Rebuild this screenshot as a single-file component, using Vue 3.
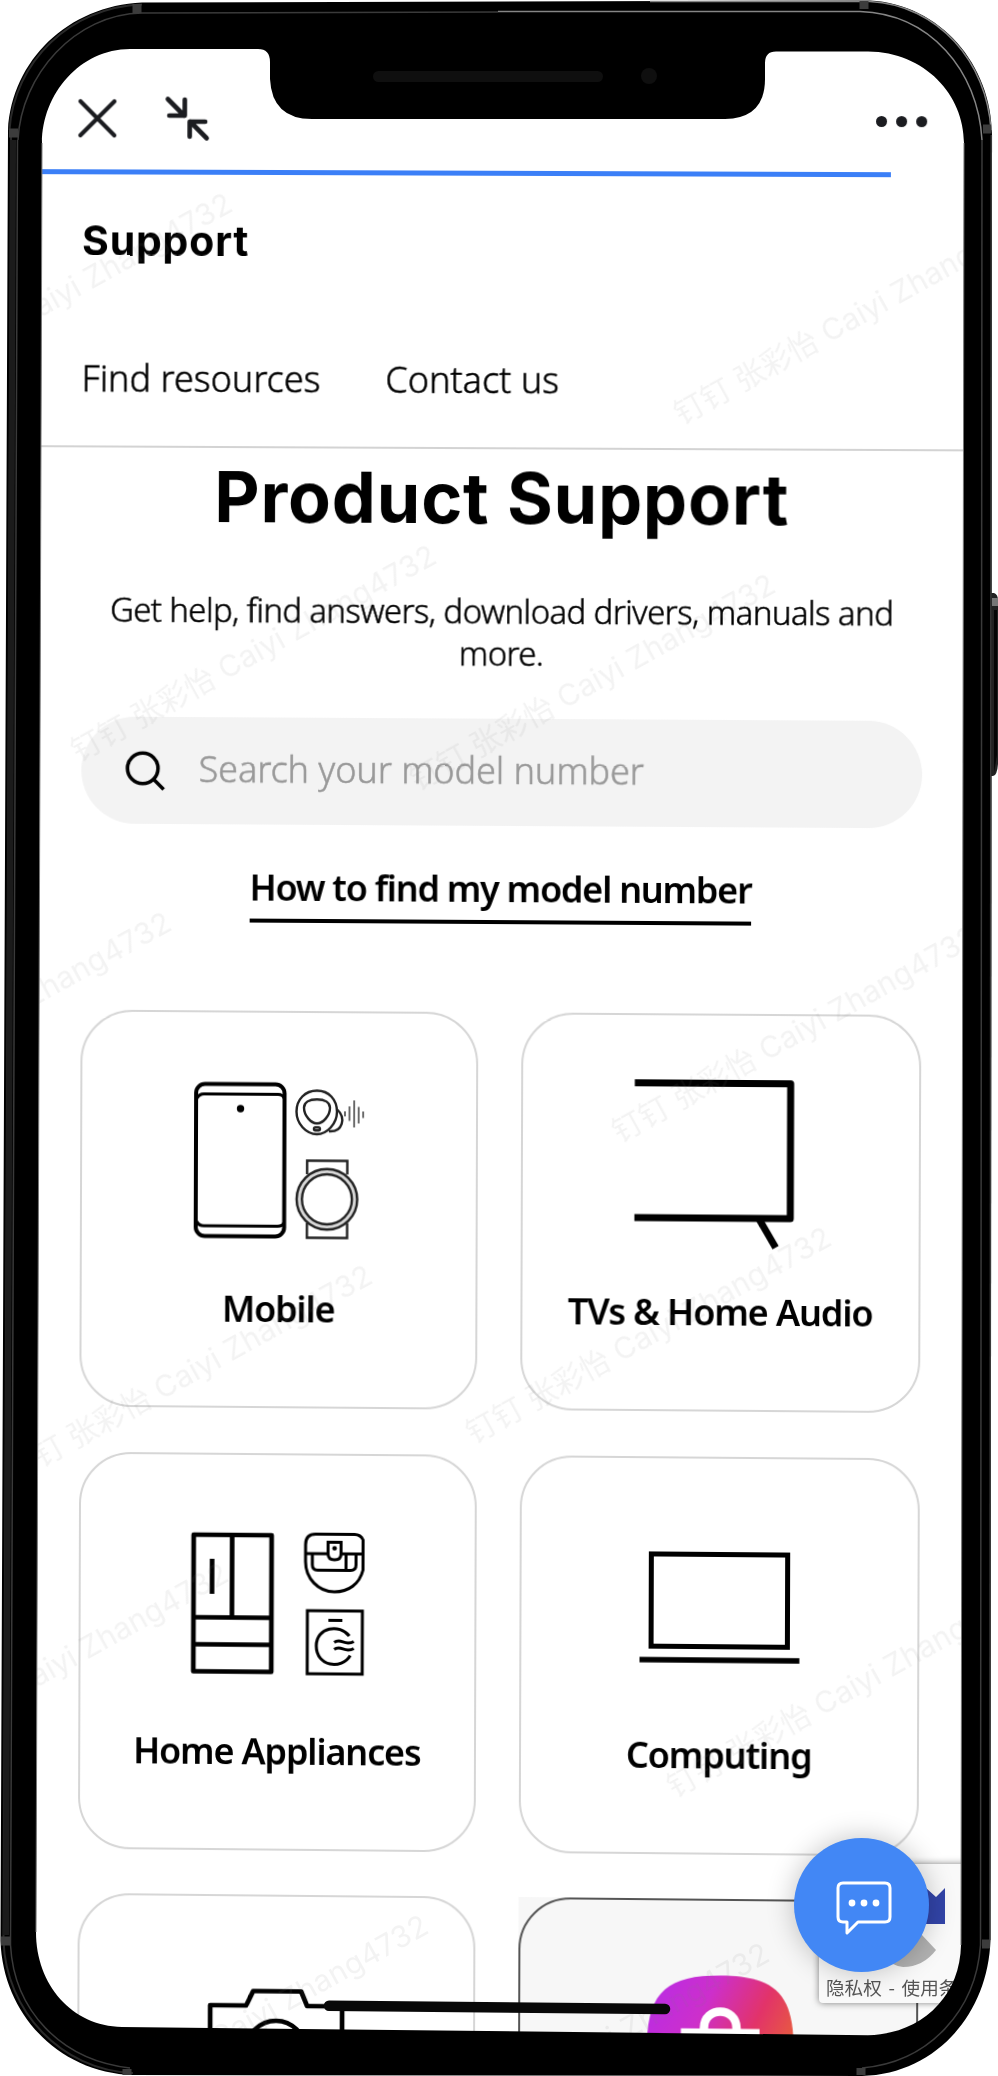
<template>
    <div class="phone">
        <div class="screen">
            <div class="page">
                <header class="toolbar">
                    <svg class="icon-close" viewBox="0 0 40 40">
                        <path d="M3 3L37 37M37 3L3 37" />
                    </svg>
                    <svg class="icon-shrink" viewBox="0 0 46 46">
                        <path d="M3.500 3.500L20 20M5 20H20.500V4M42.500 42.500L26 26M41 26H25.500V41" />
                    </svg>
                    <div class="dots"><i></i><i></i><i></i></div>
                </header>
                <div class="progress"></div>
                <div class="brand">Support</div>
                <nav class="nav">
                    <a class="nav-first">Find resources</a>
                    <a class="nav-second">Contact us</a>
                </nav>
                <main class="main">
                    <h1 class="main-title">Product Support</h1>
                    <p class="intro">Get help, find answers, download drivers, manuals and<br />more.</p>
                    <div class="search">
                        <svg viewBox="0 0 46 46">
                            <circle cx="19.500" cy="19.500" r="15.300" />
                            <path d="M30 30L40.500 40.500" />
                        </svg>
                        <span>Search your model number</span>
                    </div>
                    <div class="help"><a>How to find my model number</a></div>
                    <div class="cards-grid">
                        <div
                            v-for="category in categories"
                            :key="category.icon"
                            class="cell"
                            :class="{ shaded: category.icon === 'shop' }"
                        >
                            <div class="card">
                                <svg v-if="category.icon === 'mobile'" class="art" viewBox="0 0 398 250">
                                    <rect x="116" y="73.500" width="88.500" height="152" rx="9" stroke-width="4" />
                                    <path stroke-width="3" d="M117 88Q119 83.500 124 83.500H198Q203 83.500 204.500 88M117 211Q119 215.300 124 215.300H198Q203 215.300 204.500 211" />
                                    <circle class="solid" cx="160.500" cy="98" r="3.700" />
                                    <g class="thin">
                                        <path d="M237 79.500C249 79.500 257 88.500 257 100.500C257 112.500 247 123 237 123C226 123 216.500 112.500 216.500 100.500C216.500 88.500 225 79.500 237 79.500Z" />
                                        <path d="M237 88.300C245 88.300 250 91.500 250 96.500C250 104.500 243 112.300 237 112.300C231 112.300 224 104.500 224 96.500C224 91.500 229 88.300 237 88.300Z" />
                                        <path d="M257.500 98.500C266 106.500 263 121 249 120" />
                                        <rect x="234" y="116.200" width="6" height="3" rx="1.500" />
                                        <path class="sound" d="M265 100V105M269.500 95V109.500M274.200 89V116M278.700 95.500V112M283.200 100V106.500" />
                                        <path d="M227.300 163V149.500H267.500V163M227.300 211.500V226.500H267.500V211.500" />
                                        <circle cx="247.200" cy="188" r="28" stroke="#d8d8d8" stroke-width="4" />
                                        <circle cx="247.200" cy="188" r="30.300" />
                                        <circle cx="247.200" cy="188" r="25" />
                                    </g>
                                </svg>
                                <svg v-else-if="category.icon === 'tv'" class="art" viewBox="0 0 398 250">
                                    <path stroke-width="7" stroke-linejoin="round" d="M113.500 69.500H269V204H113.500" />
                                    <path stroke-width="7" d="M237.500 204L254.500 233" />
                                </svg>
                                <svg v-else-if="category.icon === 'home'" class="art" viewBox="0 0 398 250">
                                    <g stroke-width="4.700" stroke-linejoin="round">
                                        <rect x="115" y="82" width="78" height="136.500" />
                                        <path d="M153.500 83V164.500M115 164.500H193M115 191.500H193" />
                                        <path d="M133.500 106V141" />
                                    </g>
                                    <g stroke-width="3">
                                        <path d="M284.500 86Q282 80.500 276 80.500H237Q227 80.500 227 91V108C227 125 240 138 256 138C270 138 281 130 284.500 116Z" />
                                        <path d="M227 100H249M262.500 100H285M233.800 100V111Q233.800 116.500 239 116.500H272Q277.500 116.500 277.500 111V100M267.500 100V116.500" />
                                        <path d="M249.500 88.500H262.500V100Q262.500 106 256 106Q249.500 106 249.500 100Z" />
                                        <circle class="solid" cx="256" cy="94.500" r="2.300" />
                                        <rect x="229" y="157" width="55" height="63" />
                                        <path d="M250 166.500H264M271 182C261.500 169.500 238 173 238 192C238 213 263.500 216 272 201.500" />
                                        <path d="M256 188.500C262.500 183.500 266.500 192.500 275.500 187.500M256 195.500C262.500 190.500 266.500 199.500 275.500 194.500" />
                                    </g>
                                </svg>
                                <svg v-else-if="category.icon === 'computing'" class="art" viewBox="0 0 398 250">
                                    <rect x="131.500" y="97.500" width="136" height="92" stroke-width="5" />
                                    <path stroke-width="5.500" d="M120 203H279.500" />
                                </svg>
                                <svg v-else-if="category.icon === 'camera'" class="art" viewBox="0 0 398 250">
                                    <g stroke-width="4.700" stroke-linejoin="round">
                                        <path d="M133 180V111H169L176 96.500H224L230 111H265V180Z" />
                                        <circle cx="199" cy="155" r="29" />
                                    </g>
                                </svg>
                                <svg v-else class="art" viewBox="0 0 398 250">
                                    <defs>
                                        <linearGradient id="shop" x1="0" y1="0" x2="1" y2=".5">
                                            <stop offset="0" stop-color="#b62be8" />
                                            <stop offset=".4" stop-color="#cd2fcb" />
                                            <stop offset=".72" stop-color="#e23369" />
                                            <stop offset="1" stop-color="#e8603a" />
                                        </linearGradient>
                                    </defs>
                                    <path fill="url(#shop)" stroke="none" d="M202 76.500C257 76.500 275 95 275 149.500C275 204 257 222 202 222C147 222 128.500 204 128.500 149.500C128.500 95 147 76.500 202 76.500Z" />
                                    <path stroke="#fff" stroke-width="8.500" d="M185.500 134V129C185.500 107 218 107 218 129V134" />
                                    <path fill="#fff" stroke="none" d="M162.500 129.500H241V190H162.500Z" />
                                </svg>
                                <div class="label">{{ category.text }}</div>
                            </div>
                        </div>
                    </div>
                </main>
            </div>

            <div class="recaptcha">
                <svg viewBox="0 0 145 140">
                    <path fill="#3244a8" d="M80 24H107L117 33L126 24V60H80Z" />
                    <path fill="#b1b1b1" d="M60 70H102L117 86Q104 103 84 103Q62 101 60 70Z" />
                </svg>
                <span>隐私权 - 使用条款</span>
            </div>
            <div class="chat">
                <svg viewBox="0 0 60 60">
                    <path d="M9 5H51Q56 5 56 10V39Q56 44 51 44H24L13 55V44H9Q4 44 4 39V10Q4 5 9 5Z" />
                    <circle cx="18" cy="25" r="3.400" />
                    <circle cx="30" cy="25" r="3.400" />
                    <circle cx="42" cy="25" r="3.400" />
                </svg>
            </div>
            <span
                v-for="(mark, index) in marks"
                :key="index"
                class="mark"
                :style="{ left: `${mark[0]}px`, top: `${mark[1]}px` }"
            >钉钉 张彩怡 Caiyi Zhang4732</span>
        </div>

        <!-- device body with the screen cut out -->
        <svg class="frame" viewBox="0 0 998 2076">
            <path fill="#222" d="M990 593H994Q998 594 998 601V764Q997 776 993 776H990Z" />
            <path fill="#050505" d="M994 610H997V755L994 773Z" />
            <rect x="992" y="598" width="6" height="8" fill="#777" />
            <path
                fill="#000"
                fill-rule="evenodd"
                d="M142 2.500L870 .5C940 4 992 65 992 135L990.500 1940C988 2015 935 2074 862 2076L133 2075C60 2073 3 2015 .5 1941L8 130C12 60 68 6 142 2.500Z
                M130 49H258Q270 49 270 62V79Q272 119 312 119H725Q765 118 765 79V63Q765 51.500 776 51.500H868C925 52 964 95 964 143L961 1945C960 1998 920 2034 868 2035.300L122 2027C72 2026 36 1985 36 1932L42 143C42 94 80 49 130 49Z"
            />
            <path class="metal" d="M9.500 130C14 62 70 7 142 4.500" />
            <path class="metal" d="M11 135L3.500 1941C6 2010 60 2070 133 2073" />
            <path class="metal wide" d="M13 140L6 1935" />
            <path class="shine" d="M18 140C21 75 75 14 142 13L498 12" />
            <path class="shine" d="M17.500 140L10.500 1945C14 2010 60 2060 130 2068" />
            <path class="shine bright" d="M498 11.500L860 11.500C930 14 978 70 982 140" />
            <path class="shine" d="M982 140L980.500 1945C976 2010 930 2062 862 2068" />
            <path class="shine bright" d="M650 1.500L870 1.500C938 5 987 62 991 130" />
            <path class="shine" d="M991.300 135L989.800 1940" />
            <path class="seam" d="M137 4V13M864 1V9M9 133H18M983 129H991M982 1944H990M1 1941H10M127 2069V2075M861 2068V2075" />
            <path class="edge" d="M42 143L36 1932M964 143L961 1945" />
            <rect x="373" y="71" width="230" height="11" rx="5.500" fill="#0f0f0f" />
            <circle cx="649" cy="76" r="8" fill="#0f0f0f" />
            <path d="M329 2005.800L665 2009" stroke="#080808" stroke-width="10.500" stroke-linecap="round" />
        </svg>
    </div>
</template>

<script setup>
const categories = [
    { icon: 'mobile', text: 'Mobile' },
    { icon: 'tv', text: 'TVs & Home Audio' },
    { icon: 'home', text: 'Home Appliances' },
    { icon: 'computing', text: 'Computing' },
    { icon: 'camera', text: '' },
    { icon: 'shop', text: '' }
]

// centre of the first glyph of every watermark line
const marks = [
    [689, 408],
    [-118, 393],
    [86, 745],
    [425, 774],
    [-179, 1112],
    [627, 1126],
    [22, 1465],
    [481, 1427],
    [-122, 1763],
    [682, 1781],
    [78, 2115],
    [419, 2143]
]
</script>

<style>
body {
    margin: 0;
    background: #fff;
}
</style>

<style scoped>
.phone {
    position: relative;
    width: 998px;
    height: 2076px;
    overflow: hidden;
    font-family: "Noto Sans", "Noto Sans CJK SC", sans-serif;
    color: #000;
}

.screen {
    position: relative;
    height: 2076px;
    background: #fff;
    clip-path: inset(30px 22px 30px 22px round 120px);
}

/* the screen is seen at a very slight angle */
.page {
    box-sizing: border-box;
    width: 998px;
    height: 2076px;
    transform-origin: 0 0;
    transform: matrix3d(0.9975, 0.003, 0, -0.0000034, -0.0032, 1, 0, 0, 0, 0, 1, 0, 0, 0, 0, 1);
}

.toolbar {
    display: flex;
    align-items: center;
    box-sizing: border-box;
    height: 169px;
    padding: 100px 74px 33px 78px;
}

.toolbar svg {
    fill: none;
    stroke: #1b1c20;
    stroke-width: 4.2;
    stroke-linecap: round;
    stroke-linejoin: round;
}

.icon-close {
    width: 40px;
    height: 40px;
}

.toolbar .icon-shrink {
    width: 46px;
    height: 46px;
    margin-left: 47px;
    stroke-width: 4.6;
}

.dots {
    display: flex;
    gap: 9px;
    margin-left: auto;
    margin-right: -3px;
}

.dots i {
    width: 11px;
    height: 11px;
    border-radius: 50%;
    background: #1b1c20;
}

.progress {
    width: 890.5px;
    height: 4.5px;
    background: #3b7ff7;
}

.brand {
    margin-left: 83px;
    margin-top: 41px;
    height: 54px;
    line-height: 50px;
    font-family: Inter, sans-serif;
    font-size: 41px;
    font-weight: 700;
    letter-spacing: 0.8px;
}

.nav {
    display: flex;
    box-sizing: border-box;
    height: 178px;
    padding: 84.5px 0 0 83px;
    border-bottom: 2px solid #d3d3d3;
    font-size: 36px;
    font-weight: 300;
    -webkit-text-stroke: 0.5px #000;
    line-height: 50px;
    white-space: nowrap;
}

.nav-first {
    width: 304px;
}

.main {
    width: 840px;
    margin-left: 83.5px;
}

.main-title {
    margin: 4px 0 0;
    height: 95px;
    line-height: 90px;
    font-family: Inter, sans-serif;
    font-size: 70px;
    font-weight: 700;
    letter-spacing: 0.8px;
    text-align: center;
    white-space: nowrap;
}

.intro {
    margin: 42px 0 0;
    font-size: 33px;
    font-weight: 300;
    -webkit-text-stroke: 0.45px #000;
    letter-spacing: -0.64px;
    line-height: 42px;
    text-align: center;
    white-space: nowrap;
}

.search {
    display: flex;
    align-items: center;
    box-sizing: border-box;
    height: 107px;
    margin-top: 44.5px;
    padding-left: 42px;
    border-radius: 54px;
    background: #f3f3f3;
    color: #999;
    font-size: 36px;
    font-weight: 300;
    -webkit-text-stroke: 0.5px #999;
    letter-spacing: -0.06px;
    white-space: nowrap;
}

.search svg {
    width: 46px;
    height: 46px;
    margin-right: 30px;
    margin-top: 3px;
    fill: none;
    stroke: #000;
    stroke-width: 3.6;
}

.search span {
    margin-top: -5px;
}

.help {
    display: flex;
    justify-content: center;
    height: 186px;
}

.help a {
    box-sizing: border-box;
    height: 98px;
    padding-top: 38px;
    border-bottom: 4.5px solid #000;
    font-size: 36px;
    font-weight: 600;
    letter-spacing: -1.27px;
    line-height: 50px;
    white-space: nowrap;
}

.cards-grid {
    display: grid;
    grid-template-columns: repeat(2, 398.5px);
    gap: 44.5px 43px;
}

.card {
    box-sizing: border-box;
    height: 397px;
    border: 2px solid #d6d6d6;
    border-radius: 52px;
    text-align: center;
}

.shaded {
    background: #f7f7f7;
}

.shaded .card {
    border-color: #555;
}

.art {
    display: block;
    width: 398px;
    height: 250px;
    margin: -2px 0 0 -2px;
    fill: none;
    stroke: #000;
}

.art .solid {
    fill: #000;
    stroke: none;
}

.art .thin {
    stroke: #222;
    stroke-width: 2.4;
}

.art .sound {
    stroke: #666;
    stroke-width: 1.9;
}

.label {
    margin-top: 23px;
    font-size: 36px;
    font-weight: 600;
    letter-spacing: -1.15px;
    line-height: 50px;
    white-space: nowrap;
}

.recaptcha {
    position: absolute;
    left: 819px;
    top: 1864px;
    width: 160px;
    height: 139px;
    border-radius: 4px;
    background: #f9f9f9;
    box-shadow: 0 0 7px rgba(0, 0, 0, 0.5);
    color: #555;
    font-family: "Noto Sans CJK SC", sans-serif;
    font-size: 18.6px;
    word-spacing: 2.5px;
    line-height: 24px;
    white-space: nowrap;
}

.recaptcha svg {
    display: block;
    width: 145px;
    height: 140px;
    margin-bottom: -29px;
}

.recaptcha span {
    margin-left: 7px;
}

.chat {
    position: absolute;
    left: 794px;
    top: 1838px;
    display: flex;
    align-items: center;
    justify-content: center;
    width: 135px;
    height: 134px;
    border-radius: 50%;
    background: #4287f5;
    box-shadow: 0 0 28px rgba(0, 0, 0, 0.24);
}

.chat svg {
    width: 60px;
    height: 60px;
    margin: 5px 0 0 4px;
    fill: none;
    stroke: #fff;
    stroke-width: 3;
    stroke-linejoin: round;
}

.chat circle {
    fill: #fff;
    stroke: none;
}

.mark {
    position: absolute;
    margin: -20px 0 0 -15px;
    color: rgba(128, 128, 128, 0.095);
    font-family: Inter, "Noto Sans CJK SC", sans-serif;
    font-size: 30px;
    line-height: 40px;
    letter-spacing: 0.2px;
    white-space: nowrap;
    transform: rotate(-29deg);
    transform-origin: 15px 20px;
}

.frame {
    position: absolute;
    left: 0;
    top: 0;
    width: 998px;
    height: 2076px;
}

.frame .metal,
.frame .shine,
.frame .seam,
.frame .edge {
    fill: none;
    stroke: #292929;
    stroke-width: 2;
}

.frame .wide {
    stroke: #1b1b1b;
    stroke-width: 6;
}

.frame .shine {
    stroke: #3a3a3a;
    stroke-width: 1.5;
}

.frame .bright {
    stroke: #858585;
}

.frame .seam {
    stroke: #3c3c3c;
    stroke-width: 9;
}

.frame .edge {
    stroke: #777;
    stroke-width: 1;
}
</style>
